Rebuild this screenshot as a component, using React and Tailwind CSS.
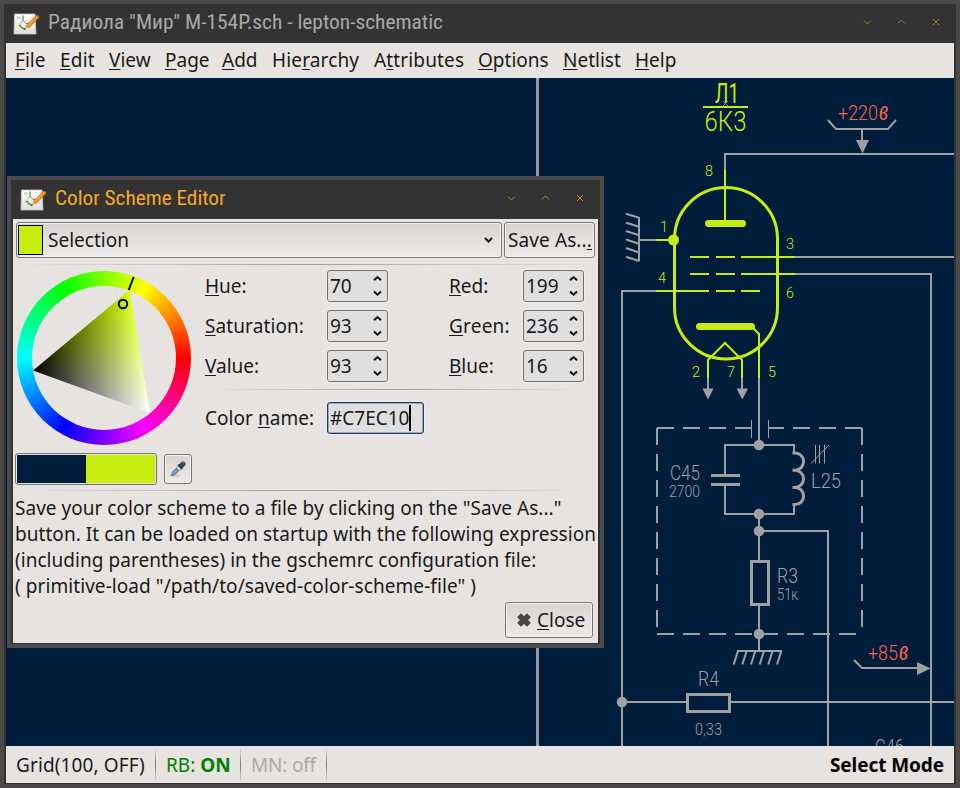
import React from "react";

const GREEN = "#c7ec10";
const GRAY = "#a0a0a0";
const RED = "#ff6347";

function U({ children }) {
  return <span className="underline decoration-1 underline-offset-[2px] [text-decoration-skip-ink:none]">{children}</span>;
}

function AppIcon() {
  return (
    <svg className="block h-[24px] w-[28px] shrink-0" viewBox="0 0 28 24">
      <defs>
        <linearGradient id="paper" x1="0" y1="0" x2="0" y2="1">
          <stop offset="0" stopColor="#ffffff" />
          <stop offset="1" stopColor="#dededa" />
        </linearGradient>
      </defs>
      <path d="M2.500 2 H23 L24 22 H2 Z" fill="url(#paper)" stroke="#c8c8c4" strokeWidth="0.8" />
      <rect x="5" y="4.500" width="3.500" height="2" fill="#c9c9c9" />
      <path d="M11 3.500 V8.500 M6.500 13.500 H8.500 Q8.500 16.500 12 16 M11.500 15.500 V17.500" fill="none" stroke="#4ea032" strokeWidth="1.300" />
      <path d="M8 11.500 L11 8.500 L14.500 11.500" fill="none" stroke="#a76a86" strokeWidth="0.900" />
      <path d="M14 11.500 H17" stroke="#5b7c45" strokeWidth="1" />
      <path d="M12.500 17.500 L14.500 13.300 L16.800 15.800 Z" fill="#d8b48c" />
      <path d="M14.300 13.500 L24.300 3.300 Q27.500 3 26.800 5.800 L16.800 15.800 Z" fill="#f08a24" stroke="#c7641a" strokeWidth="0.7" />
      <path d="M15.500 13.800 L25 4.500" stroke="#ffb45e" strokeWidth="1" />
      <circle cx="12.700" cy="17.200" r="0.9" fill="#554" />
    </svg>
  );
}

function WindowButtons({ dim }) {
  const c = dim ? "#b27612" : "#d08a1c";
  return (
    <svg className="mb-[4px] block h-[10px] w-[78px] shrink-0" viewBox="0 0 78 10" fill="none" stroke={c} strokeWidth="1">
      <path d="M1 3.500 L4.500 7 L8 3.500" />
      <path d="M35 6.500 L38.500 3 L42 6.500" />
      <path d="M70 2 L76 8 M76 2 L70 8" />
    </svg>
  );
}

function TitleBar({ text, dim }) {
  return (
    <div className="flex h-[39px] shrink-0 items-center bg-[#333333] pl-[8px] pr-[15px]">
      <AppIcon />
      <div className="mb-[3px] min-w-0 flex-1 pl-[7px]">
        <svg className="block h-[30px] w-full overflow-visible">
          <text
            x="1"
            y="22"
            fontSize="21"
            fill={dim ? "#a9a9a9" : "#f9a825"}
            textLength={dim ? 395 : 170.5}
            lengthAdjust="spacingAndGlyphs"
            className="font-['Roboto_Condensed',Roboto,sans-serif]"
          >
            {text}
          </text>
        </svg>
      </div>
      <WindowButtons dim={dim} />
    </div>
  );
}

function T({ x, y, s, w, c = GRAY, children, weight = 300 }) {
  return (
    <text
      x={x}
      y={y}
      fontSize={s}
      fill={c}
      textLength={w}
      lengthAdjust="spacingAndGlyphs"
      fontWeight={weight}
      className="font-[Roboto,sans-serif]"
    >
      {children}
    </text>
  );
}

/* handwritten-style tall volt letter */
function Volt({ x, y }) {
  return (
    <text x={x} y={y} fontSize="30" fill={RED} textLength="9" lengthAdjust="spacingAndGlyphs" className="font-['Liberation_Serif',serif] italic">
      в
    </text>
  );
}

function Schematic() {
  return (
    <svg className="block h-[668px] w-[948px] shrink-0" viewBox="6 78 948 668" fill="none">
      <path d="M537.500 78 V746" stroke="#999999" strokeWidth="3" />

      {/* nets */}
      <g stroke={GRAY} strokeWidth="2">
        <path d="M725 170 V154 H954" />
        <path d="M828 120 L836 129 H888 L896 120 M862 129 V142" />
        <path d="M640 240 H656" />
        <path d="M639 217 V261 M626 213.700 L639 217.700 M626 222.700 L639 226.700 M626 231 L639 235.300 M626 239.500 L639 243.700 M626 248 L639 252.500 M626 256.700 L639 261" />
        <path d="M795 257 H954 M795 274 H931 V746" />
        <path d="M656 291 H622 V746" />
        <path d="M708 378 V390 M742 378 V390 M759 378 V445" />
        <path d="M725 476 V445 H794 V453 M725 485 V514 H794 V504" />
        <path d="M759 514 V561 M759 531 H828 V746 M759 605 V651" />
        <path d="M737 651 H782 M738 651 L733.700 664.500 M746.700 651 L742.300 664.500 M755.300 651 L751 664.500 M764 651 L759.700 664.500 M772.500 651 L768.300 664.500 M781.300 651 L777 664.500" />
        <path d="M622 702 H687 M730 702 H954" />
        <path d="M854 660 L862 668 H918" />
      </g>
      <g fill={GRAY}>
        <path d="M856 140 H869 L862.500 153.500 Z" />
        <path d="M702.500 388.500 H713.500 L708 399.500 Z M736.500 388.500 H748 L742.300 399.500 Z" />
        <path d="M917 662 L930.500 668.500 L917 675 Z" />
        <circle cx="759" cy="445" r="5.300" />
        <circle cx="759" cy="514" r="5.300" />
        <circle cx="759" cy="531" r="5.300" />
        <circle cx="759" cy="634" r="5.300" />
        <circle cx="622" cy="702" r="5.300" />
      </g>

      {/* shield box */}
      <g stroke={GRAY} strokeWidth="2" strokeDasharray="17 9">
        <path d="M657 428 H752" />
        <path d="M862 428 H768" />
        <path d="M657 428 V634" />
        <path d="M862 428 V634" />
        <path d="M657 634 H862" />
      </g>
      <path d="M751.500 420 V438 M768.500 420 V438" stroke={GRAY} />

      {/* components */}
      <g stroke={GRAY} strokeWidth="3">
        <path d="M711 475.500 H740 M711 484.500 H740" />
        <path d="M792.500 453 H795 A8.500 8.500 0 0 1 795 470.200 H792.500 M795 470.200 A8.500 8.500 0 0 1 795 487.400 H792.500 M795 487.400 A8.500 8.500 0 0 1 795 504.600 H792.500" />
        <rect x="751.500" y="561.500" width="17" height="43" />
        <rect x="687.500" y="694.500" width="42" height="17" />
      </g>
      <path d="M815.500 445 V463.500 M819.500 445 V463.500 M824.500 445 V463.500 M811 463.500 L829 445" stroke={GRAY} />

      {/* selected tube */}
      <g stroke={GREEN} strokeWidth="2">
        <path d="M703 107 H748" />
        <path d="M725 170 V222" />
        <path d="M656 240 H674" />
        <path d="M690 257 H709 M716 257 H735 M741 257 H795" />
        <path d="M690 274 H709 M716 274 H735 M741 274 H795" />
        <path d="M656 291 H709 M716 291 H735 M741 291 H760" />
        <path d="M753 328 L759 334 V378" />
        <path d="M708 378 V360 L725 343 L742 360 V378" />
      </g>
      <path d="M674.500 239 A51.500 51.500 0 0 1 777.500 239 V307.500 A51.500 51.500 0 0 1 674.500 307.500 Z" stroke={GREEN} strokeWidth="3" />
      <path d="M708.500 223.500 H742.500 M699.500 326.500 H751.500" stroke={GREEN} strokeWidth="7" strokeLinecap="round" />
      <circle cx="673.500" cy="240" r="5.500" fill={GREEN} />

      <T x={715} y={103} s={28} w={24} c={GREEN} weight={400}>Л1</T>
      <path d="M723 101 L728 106 M728 101 L723 106" stroke="#909090" />
      <T x={704.500} y={131} s={28} w={42} c={GREEN}>6К3</T>
      <T x={705} y={176} s={15.500} w={8} c={GREEN}>8</T>
      <T x={660} y={232} s={15.500} w={8} c={GREEN}>1</T>
      <T x={658} y={283} s={15.500} w={8} c={GREEN}>4</T>
      <T x={786} y={249} s={15.500} w={8} c={GREEN}>3</T>
      <T x={786} y={298} s={15.500} w={8} c={GREEN}>6</T>
      <T x={692} y={377} s={15.500} w={8} c={GREEN}>2</T>
      <T x={727} y={377} s={15.500} w={8} c={GREEN}>7</T>
      <T x={768} y={377} s={15.500} w={8} c={GREEN}>5</T>

      <T x={838} y={120} s={21} w={40} c={RED}>+220</T>
      <Volt x={879} y={120} />
      <T x={868} y={660} s={21} w={30} c={RED}>+85</T>
      <Volt x={899} y={660} />
      <T x={670} y={480} s={21} w={30}>C45</T>
      <T x={669} y={497} s={16} w={31}>2700</T>
      <T x={811} y={488} s={21} w={30}>L25</T>
      <T x={777} y={583} s={21} w={21}>R3</T>
      <T x={777} y={600} s={16} w={21}>51к</T>
      <T x={698} y={686} s={21} w={21}>R4</T>
      <T x={695} y={735} s={16} w={27}>0,33</T>
      <T x={875} y={754} s={21} w={29}>C46</T>
    </svg>
  );
}

function Rule({ className }) {
  return <div className={"h-[1px] bg-linear-to-r from-transparent via-[#a39e98] to-transparent " + className} />;
}

function Spin({ value }) {
  return (
    <div className="flex h-[32px] w-[61px] items-center justify-between rounded-[3px] border border-[#75706a] bg-[#dfdfdf] pl-[2px] pr-[5px] shadow-[0_0_0_1px_#efedea]">
      <span>{value}</span>
      <svg className="h-[22px] w-[9px]" viewBox="0 0 9 22" fill="none" stroke="#111" strokeWidth="2">
        <path d="M1 5.300 L4.500 2.100 L8 5.300" />
        <path d="M1 16.500 L4.500 19.700 L8 16.500" />
      </svg>
    </div>
  );
}

function ColorWheel() {
  return (
    <div className="flex h-[174px] w-[174px] items-center justify-center rounded-full bg-[conic-gradient(from_90deg,#f00,#f0f,#00f,#0ff,#0f0,#ff0,#f00)]">
      <div className="h-[144px] w-[144px] rounded-full bg-[#e6e3e0]">
        <svg className="-m-[15px] block h-[174px] w-[174px]" viewBox="17 271 174 174" fill="none">
          <defs>
            <linearGradient id="hueRamp" gradientUnits="userSpaceOnUse" x1="91.500" y1="391.700" x2="129.500" y2="290">
              <stop offset="0" stopColor="#000" />
              <stop offset="1" stopColor="#d4ff00" />
            </linearGradient>
            <linearGradient id="whiteRamp" gradientUnits="userSpaceOnUse" x1="81.200" y1="330.200" x2="150" y2="413">
              <stop offset="0" stopColor="#000" />
              <stop offset="1" stopColor="#fff" />
            </linearGradient>
            <clipPath id="triangle">
              <polygon points="129.500,290 33,370.500 150,413" />
            </clipPath>
          </defs>
          <g clipPath="url(#triangle)" className="isolate">
            <rect x="30" y="285" width="125" height="132" fill="url(#hueRamp)" />
            <rect x="30" y="285" width="125" height="132" fill="url(#whiteRamp)" className="mix-blend-plus-lighter" />
          </g>
          <path d="M133.700 277 L128.700 290" stroke="#000" strokeWidth="2" />
          <circle cx="123" cy="304" r="4.200" stroke="#000" strokeWidth="2" />
        </svg>
      </div>
    </div>
  );
}

const btn = "flex items-center rounded-[3px] border border-[#7d766e] bg-linear-to-b from-[#d8d4d0] to-[#eceae8] shadow-[inset_0_0_0_1px_#f3f1ef]";

function Dialog() {
  return (
    <div className="absolute left-[3px] top-[172px] flex h-[472px] w-[597px] flex-col border-4 border-[#4e4a4b] bg-[#333333]">
      <TitleBar text="Color Scheme Editor" />
      <div className="mx-[2px] mb-[1px] flex flex-1 flex-col bg-[#e6e3e0] pt-[3px]">
        <div className="flex gap-[2px] pl-[3px]">
          <div className={btn + " h-[36px] w-[486px] pl-[1px] pr-[8px]"}>
            <div className="h-[30px] w-[25px] border border-black bg-[#c7ec10]" />
            <span className="flex-1 pl-[5px]">Selection</span>
            <svg className="h-[8px] w-[9px]" viewBox="0 0 9 8" fill="none" stroke="#111" strokeWidth="2">
              <path d="M1 2 L4.500 5.500 L8 2" />
            </svg>
          </div>
          <div className={btn + " h-[36px] w-[91px] whitespace-nowrap pl-[3px]"}>
            <span className="tracking-[0.1px]">Save As..<U>.</U></span>
          </div>
        </div>
        <Rule className="ml-[3px] mt-[6px] w-[579px]" />
        <div className="flex pt-[5px]">
          <div className="flex w-[192px] flex-col pl-[2px] pt-[1px]">
            <div className="pl-[2px]"><ColorWheel /></div>
            <div className="mt-[8px] flex items-center gap-[7px]">
              <div className="flex h-[32px] w-[142px] rounded-[3px] border border-[#7d766e] p-[1px]">
                <div className="w-[69px] bg-[#001d3c]" />
                <div className="flex-1 bg-[#c7ec10]" />
              </div>
              <div className={btn + " h-[30px] w-[28px] justify-center"}>
                <svg className="h-[18px] w-[18px]" viewBox="0 0 18 18">
                  <ellipse cx="6" cy="15.500" rx="5" ry="1.300" fill="#c9c6c2" />
                  <path d="M2.500 15.500 L3.500 12 L9.500 6 L12 8.500 L6 14.500 Z" fill="#6f9fd0" stroke="#6a6d70" strokeWidth="1" />
                  <path d="M8.500 7 L11 9.500" stroke="#e6eef6" strokeWidth="1.400" />
                  <path d="M9 4.500 L10.500 4 L12.500 1.800 Q14.500 0.800 16 2.200 Q17.300 4 16 5.700 L14 7.500 L13.500 9 L12.500 9.500 L8.500 5.500 Z" fill="#3d4244" />
                  <path d="M13 3 L14.500 2.500" stroke="#8a8f92" strokeWidth="1" />
                </svg>
              </div>
            </div>
          </div>
          <div className="w-[379px]">
            <div className="grid grid-cols-[122px_122px_74px_61px] items-center gap-y-[8px]">
              <span><U>H</U>ue:</span><Spin value="70" /><span><U>R</U>ed:</span><Spin value="199" />
              <span className="tracking-[0.1px]"><U>S</U>aturation:</span><Spin value="93" /><span className="tracking-[0.2px]"><U>G</U>reen:</span><Spin value="236" />
              <span><U>V</U>alue:</span><Spin value="93" /><span><U>B</U>lue:</span><Spin value="16" />
            </div>
            <Rule className="mt-[7px] w-[379px]" />
            <div className="flex items-center pt-[12px]">
              <span className="w-[122px] whitespace-nowrap tracking-[0.05px]">Color <U>n</U>ame:</span>
              <div className="flex h-[32px] w-[97px] items-center rounded-[3px] border border-[#27384f] bg-[#dfdfdf] pl-[2px] shadow-[inset_0_0_0_1px_#8fa9cb,0_0_0_1px_#efedea]">
                <span>#C7EC10</span>
                <div className="h-[26px] w-[2px] bg-black" />
              </div>
            </div>
          </div>
        </div>
        <Rule className="ml-[3px] mt-[5px] w-[579px]" />
        <div className="whitespace-nowrap pl-[2px] pt-[4px] leading-[26px]">
          <div className="tracking-[0.02px]">Save your color scheme to a file by clicking on the "Save As..."</div>
          <div className="tracking-[0.05px]">button. It can be loaded on startup with the following expression</div>
          <div className="tracking-[0.04px]">(including parentheses) in the gschemrc configuration file:</div>
          <div className="tracking-[0.07px]">( primitive-load "/path/to/saved-color-scheme-file" )</div>
        </div>
        <div className="flex justify-end pr-[5px] pt-[3px]">
          <div className={btn + " h-[36px] w-[88px] gap-[5px] pl-[10px]"}>
            <svg className="h-[16px] w-[16px]" viewBox="0 0 16 16">
              <path d="M3 3.300 L13 12.700 M13 3.300 L3 12.700" stroke="#454545" strokeWidth="5.600" strokeLinecap="butt" />
            </svg>
            <span><U>C</U>lose</span>
          </div>
        </div>
      </div>
    </div>
  );
}

function StatusRule() {
  return <div className="h-[32px] w-[1px] bg-linear-to-b from-[#dcd8d4] via-[#7d766e] to-[#dcd8d4]" />;
}

export default function App() {
  return (
    <div className="relative flex h-[788px] w-[960px] flex-col overflow-hidden border-4 border-b-[4px] border-[#4e4a4b] bg-[#333333] font-['Noto_Sans',sans-serif] text-[19px] leading-[26px] text-[#1a1a1a]">
      <TitleBar text={'Радиола "Мир" М-154Р.sch - lepton-schematic'} dim />
      <div className="mx-[2px] flex h-[35px] shrink-0 items-center whitespace-nowrap bg-[#e6e3e0] pb-[1px] pl-[9px]">
        <span className="w-[45px]"><U>F</U>ile</span>
        <span className="w-[49px] tracking-[0.2px]"><U>E</U>dit</span>
        <span className="w-[56px]"><U>V</U>iew</span>
        <span className="w-[57px]"><U>P</U>age</span>
        <span className="w-[50px]"><U>A</U>dd</span>
        <span className="w-[102px] tracking-[0.15px]">Hie<U>r</U>archy</span>
        <span className="w-[104px] tracking-[0.15px]">A<U>t</U>tributes</span>
        <span className="w-[85px]"><U>O</U>ptions</span>
        <span className="w-[72px]"><U>N</U>etlist</span>
        <span><U>H</U>elp</span>
      </div>
      <div className="mx-[2px] bg-[#001d3c]">
        <Schematic />
      </div>
      <div className="mx-[2px] flex h-[37px] shrink-0 items-center whitespace-nowrap bg-[#e6e3e0] pl-[10px] pr-[10px]">
        <span className="w-[139px] tracking-[0.12px]">Grid(100, OFF)</span>
        <StatusRule />
        <span className="w-[84px] pl-[10px] text-[#008000]">RB: <b>ON</b></span>
        <StatusRule />
        <span className="w-[85px] pl-[10px] tracking-[-0.2px] text-[#acaaa8]">MN: off</span>
        <StatusRule />
        <b className="ml-auto tracking-[-0.08px] text-black">Select Mode</b>
      </div>
      <Dialog />
    </div>
  );
}
